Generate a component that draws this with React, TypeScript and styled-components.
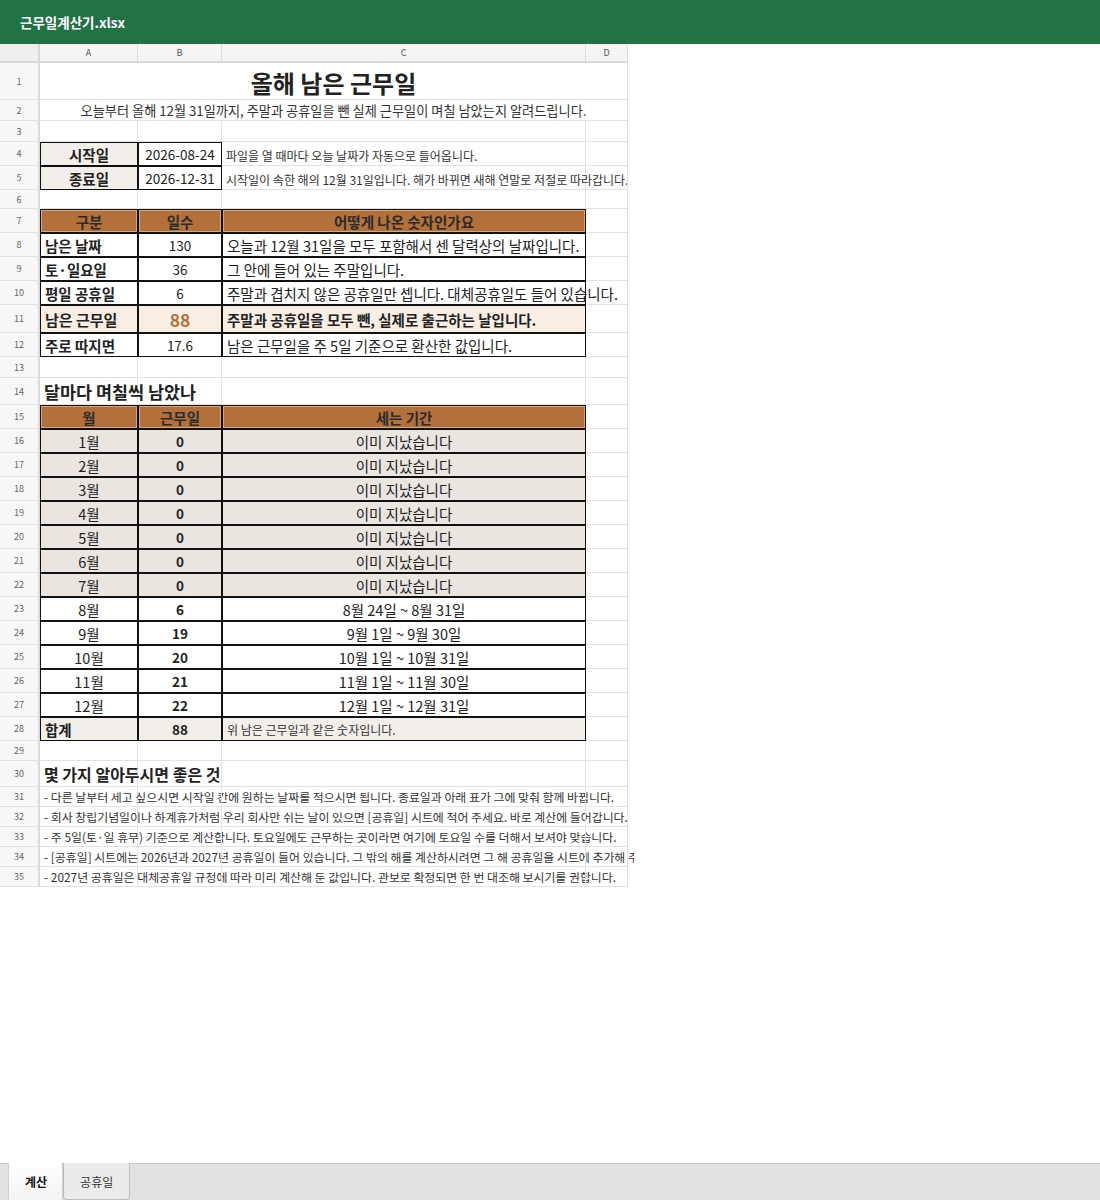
import React from 'react';
import styled, { createGlobalStyle, css } from 'styled-components';

const GlobalStyle = createGlobalStyle`
  html, body {
    margin: 0;
    padding: 0;
    background: #fff;
  }
  body {
    font-family: "Noto Sans CJK KR", "Noto Sans", sans-serif;
    color: #222;
  }
  * {
    box-sizing: border-box;
  }
`;

// row heights of the sheet, rows 1..35
const ROW_HEIGHTS = [
  37, 21, 21, 24, 24, 19, 24, 24, 24, 24, 28, 24, 21, 27, 24,
  24, 24, 24, 24, 24, 24, 24, 24, 24, 24, 24, 24,
  24, 20, 26, 20, 20, 20, 20, 20,
];

const BROWN = '#b4703b';
const GRID = '#e2e2e2';

const Page = styled.div`
  display: flex;
  flex-direction: column;
  height: 100vh;
`;

const TitleBar = styled.header`
  flex: none;
  height: 44px;
  display: flex;
  align-items: center;
  padding-left: 20px;
  background: #217346;
  color: #fff;
  font-size: 13.5px;
  font-weight: 700;
`;

const SheetArea = styled.main`
  flex: 1;
  overflow: hidden;
  background: #fff;
`;

const Sheet = styled.div`
  display: grid;
  width: 628px;
  grid-template-columns: 40px 98px 84px 364px 42px;
  grid-template-rows: 19px ${ROW_HEIGHTS.map((h) => `${h}px`).join(' ')};
  overflow: clip;
  overflow-clip-margin: 6px;
`;

const Corner = styled.div`
  background: #eeeeee;
  border-right: 2px solid #d8d8d8;
  border-bottom: 2px solid #d8d8d8;
`;

const ColHead = styled.div`
  display: flex;
  align-items: center;
  justify-content: center;
  background: #f5f5f5;
  border-right: 1px solid #dcdcdc;
  border-bottom: 2px solid #d8d8d8;
  font-size: 9px;
  color: #555;
`;

const RowHead = styled.div`
  display: flex;
  align-items: center;
  justify-content: center;
  background: #f7f7f7;
  border-right: 2px solid #dadada;
  border-bottom: 1px solid ${GRID};
  font-size: 9px;
  color: #666;
`;

type CellProps = {
  $align?: 'left' | 'center';
  $size?: number;
  $bold?: boolean;
  $color?: string;
  $bg?: string;
  $span?: number;
  $boxed?: boolean;
};

const Cell = styled.div<CellProps>`
  display: flex;
  align-items: center;
  justify-content: ${(p) => (p.$align === 'center' ? 'center' : 'flex-start')};
  padding: 0 4px;
  min-width: 0;
  white-space: nowrap;
  border-right: 1px solid ${GRID};
  border-bottom: 1px solid ${GRID};
  font-size: ${(p) => p.$size ?? 14.5}px;
  font-weight: ${(p) => (p.$bold ? 700 : 400)};
  color: ${(p) => p.$color ?? '#222'};
  background: ${(p) => p.$bg ?? 'transparent'};
  grid-column: ${(p) => (p.$span ? `span ${p.$span}` : 'auto')};
  ${(p) =>
    p.$boxed &&
    css`
      border: 1px solid #111;
    `}
`;

const TitleCell = styled(Cell)`
  justify-content: center;
  font-size: 24px;
  font-weight: 700;
  color: #222;
  padding-top: 3px;
`;

const NoteCell = styled(Cell)`
  align-items: flex-end;
  padding-bottom: 1px;
  font-size: 12px;
  color: #333;
`;

const HeadCell = styled(Cell)`
  justify-content: center;
  background: ${BROWN};
  border: 1px solid #111;
  box-shadow: inset 0 0 0 1px #d9a679;
  font-size: 14.5px;
  font-weight: 700;
  color: #2b2b2b;
`;

const SectionTitle = styled(Cell)`
  font-weight: 700;
  color: #222;
`;

const BulletNote = styled(Cell)`
  font-size: 11.9px;
  color: #333;
`;

const TabBar = styled.footer`
  flex: none;
  height: 37px;
  display: flex;
  align-items: flex-start;
  padding-left: 8px;
  background: #e1e1e1;
  border-top: 1px solid #c9c9c9;
`;

const Tab = styled.div<{ $active?: boolean }>`
  height: 37px;
  margin-top: -1px;
  display: flex;
  align-items: center;
  font-size: 12px;
  ${(p) =>
    p.$active
      ? css`
          padding: 0 15px 0 16px;
          background: linear-gradient(#ffffff, #f3f3f3);
          border-left: 1px solid #cfcfcf;
          border-right: 1px solid #cfcfcf;
          font-weight: 700;
          color: #111;
        `
      : css`
          padding: 0 16px;
          background: #ebebeb;
          border: 1px solid #bcbcbc;
          border-top: none;
          border-radius: 0 0 4px 4px;
          color: #333;
        `}
`;

const SheetRow = ({ n, children }: { n: number; children: React.ReactNode }) => (
  <>
    <RowHead>{n}</RowHead>
    {children}
  </>
);

const Blanks = ({ count }: { count: number }) => (
  <>
    {Array.from({ length: count }, (_, i) => (
      <Cell key={i} />
    ))}
  </>
);

const summary = [
  { n: 8, label: '남은 날짜', value: '130', desc: '오늘과 12월 31일을 모두 포함해서 센 달력상의 날짜입니다.' },
  { n: 9, label: '토·일요일', value: '36', desc: '그 안에 들어 있는 주말입니다.' },
  { n: 10, label: '평일 공휴일', value: '6', desc: '주말과 겹치지 않은 공휴일만 셉니다. 대체공휴일도 들어 있습니다.' },
  { n: 11, label: '남은 근무일', value: '88', desc: '주말과 공휴일을 모두 뺀, 실제로 출근하는 날입니다.', main: true },
  { n: 12, label: '주로 따지면', value: '17.6', desc: '남은 근무일을 주 5일 기준으로 환산한 값입니다.' },
];

const months = [
  { m: 1, days: 0, range: '이미 지났습니다' },
  { m: 2, days: 0, range: '이미 지났습니다' },
  { m: 3, days: 0, range: '이미 지났습니다' },
  { m: 4, days: 0, range: '이미 지났습니다' },
  { m: 5, days: 0, range: '이미 지났습니다' },
  { m: 6, days: 0, range: '이미 지났습니다' },
  { m: 7, days: 0, range: '이미 지났습니다' },
  { m: 8, days: 6, range: '8월 24일 ~ 8월 31일' },
  { m: 9, days: 19, range: '9월 1일 ~ 9월 30일' },
  { m: 10, days: 20, range: '10월 1일 ~ 10월 31일' },
  { m: 11, days: 21, range: '11월 1일 ~ 11월 30일' },
  { m: 12, days: 22, range: '12월 1일 ~ 12월 31일' },
];

const tips = [
  '- 다른 날부터 세고 싶으시면 시작일 칸에 원하는 날짜를 적으시면 됩니다. 종료일과 아래 표가 그에 맞춰 함께 바뀝니다.',
  '- 회사 창립기념일이나 하계휴가처럼 우리 회사만 쉬는 날이 있으면 [공휴일] 시트에 적어 주세요. 바로 계산에 들어갑니다.',
  '- 주 5일(토·일 휴무) 기준으로 계산합니다. 토요일에도 근무하는 곳이라면 여기에 토요일 수를 더해서 보셔야 맞습니다.',
  '- [공휴일] 시트에는 2026년과 2027년 공휴일이 들어 있습니다. 그 밖의 해를 계산하시려면 그 해 공휴일을 시트에 추가해 주세요.',
  '- 2027년 공휴일은 대체공휴일 규정에 따라 미리 계산해 둔 값입니다. 관보로 확정되면 한 번 대조해 보시기를 권합니다.',
];

const PAST_BG = '#eae6df';
const LABEL_BG = '#f2efea';
const MAIN_BG = '#f8eee4';

export default function App() {
  return (
    <Page>
      <GlobalStyle />
      <TitleBar>근무일계산기.xlsx</TitleBar>
      <SheetArea>
        <Sheet>
          <Corner />
          {['A', 'B', 'C', 'D'].map((c) => (
            <ColHead key={c}>{c}</ColHead>
          ))}

          <SheetRow n={1}>
            <TitleCell $span={4}>올해 남은 근무일</TitleCell>
          </SheetRow>
          <SheetRow n={2}>
            <Cell $span={4} $align="center" $size={13.2} $color="#333">
              오늘부터 올해 12월 31일까지, 주말과 공휴일을 뺀 실제 근무일이 며칠 남았는지 알려드립니다.
            </Cell>
          </SheetRow>
          <SheetRow n={3}>
            <Blanks count={4} />
          </SheetRow>
          <SheetRow n={4}>
            <Cell $boxed $bold $align="center" $size={14.5} $bg={LABEL_BG}>시작일</Cell>
            <Cell $boxed $align="center" $size={13.5}>2026-08-24</Cell>
            <NoteCell>파일을 열 때마다 오늘 날짜가 자동으로 들어옵니다.</NoteCell>
            <Cell />
          </SheetRow>
          <SheetRow n={5}>
            <Cell $boxed $bold $align="center" $size={14.5} $bg={LABEL_BG}>종료일</Cell>
            <Cell $boxed $align="center" $size={13.5}>2026-12-31</Cell>
            <NoteCell>시작일이 속한 해의 12월 31일입니다. 해가 바뀌면 새해 연말로 저절로 따라갑니다.</NoteCell>
            <Cell />
          </SheetRow>
          <SheetRow n={6}>
            <Blanks count={4} />
          </SheetRow>
          <SheetRow n={7}>
            <HeadCell>구분</HeadCell>
            <HeadCell>일수</HeadCell>
            <HeadCell>어떻게 나온 숫자인가요</HeadCell>
            <Cell />
          </SheetRow>
          {summary.map((r) => (
            <SheetRow key={r.n} n={r.n}>
              <Cell $boxed $bold $size={r.main ? 15 : 14.5} $bg={r.main ? MAIN_BG : undefined}>
                {r.label}
              </Cell>
              <Cell
                $boxed
                $align="center"
                $size={r.main ? 17.5 : 13.5}
                $bold={r.main}
                $color={r.main ? BROWN : '#222'}
                $bg={r.main ? MAIN_BG : undefined}
              >
                {r.value}
              </Cell>
              <Cell $boxed $bold={r.main} $size={14.5} $bg={r.main ? MAIN_BG : undefined}>
                {r.desc}
              </Cell>
              <Cell />
            </SheetRow>
          ))}
          <SheetRow n={13}>
            <Blanks count={4} />
          </SheetRow>
          <SheetRow n={14}>
            <SectionTitle $size={17.4}>달마다 며칠씩 남았나</SectionTitle>
            <Blanks count={3} />
          </SheetRow>
          <SheetRow n={15}>
            <HeadCell>월</HeadCell>
            <HeadCell>근무일</HeadCell>
            <HeadCell>세는 기간</HeadCell>
            <Cell />
          </SheetRow>
          {months.map((r, i) => {
            const bg = r.days === 0 ? PAST_BG : undefined;
            return (
              <SheetRow key={r.m} n={16 + i}>
                <Cell $boxed $align="center" $bg={bg}>{r.m}월</Cell>
                <Cell $boxed $align="center" $bold $size={13.5} $bg={bg}>{r.days}</Cell>
                <Cell $boxed $align="center" $bg={bg}>{r.range}</Cell>
                <Cell />
              </SheetRow>
            );
          })}
          <SheetRow n={28}>
            <Cell $boxed $bold $size={14.5} $bg={LABEL_BG}>합계</Cell>
            <Cell $boxed $bold $align="center" $size={13.5} $bg={LABEL_BG}>88</Cell>
            <Cell $boxed $size={12} $color="#333" $bg={LABEL_BG}>
              위 남은 근무일과 같은 숫자입니다.
            </Cell>
            <Cell />
          </SheetRow>
          <SheetRow n={29}>
            <Blanks count={4} />
          </SheetRow>
          <SheetRow n={30}>
            <SectionTitle $size={16}>몇 가지 알아두시면 좋은 것</SectionTitle>
            <Blanks count={3} />
          </SheetRow>
          {tips.map((t, i) => (
            <SheetRow key={i} n={31 + i}>
              <BulletNote>{t}</BulletNote>
              <Blanks count={3} />
            </SheetRow>
          ))}
        </Sheet>
      </SheetArea>
      <TabBar>
        <Tab $active>계산</Tab>
        <Tab>공휴일</Tab>
      </TabBar>
    </Page>
  );
}
